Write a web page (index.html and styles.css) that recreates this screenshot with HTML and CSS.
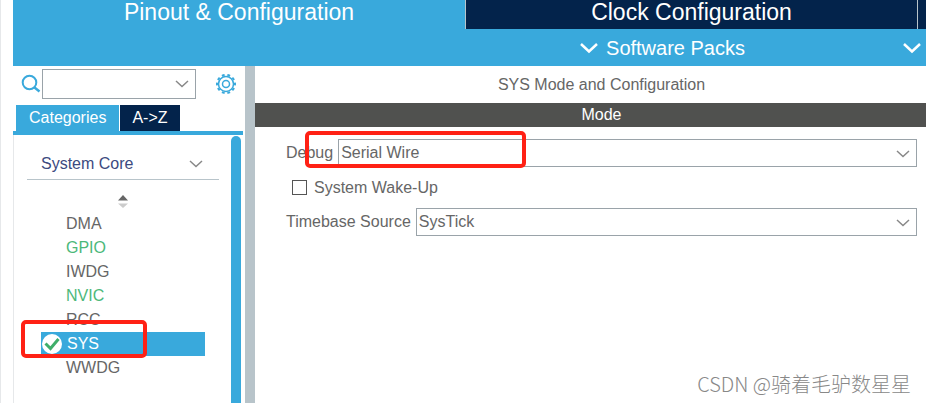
FILE: index.html
```html
<!DOCTYPE html>
<html lang="en">
<head>
    <meta charset="UTF-8">
    <meta name="viewport" content="width=device-width, initial-scale=1">
    <title>Pinout &amp; Configuration</title>
    <link rel="stylesheet" href="styles.css">
</head>
<body>
    <div class="app">
        <nav class="main-tabs">
            <button class="main-tab active">Pinout &amp; Configuration</button>
            <button class="main-tab">Clock Configuration</button>
            <button class="main-tab" aria-label="Next tab"></button>
        </nav>

        <div class="toolbar">
            <button class="menu-button">
                <svg width="18" height="12" viewBox="0 0 18 12"><path d="m1 2 8 7.500L17 2" fill="none" stroke="#fff" stroke-width="2.500"/></svg>
                Software Packs
            </button>
            <button class="menu-button" aria-label="Pinout">
                <svg width="18" height="12" viewBox="0 0 18 12"><path d="m1 2 8 7.500L17 2" fill="none" stroke="#fff" stroke-width="2.500"/></svg>
            </button>
        </div>

        <div class="content">
            <aside class="sidebar">
                <div class="search-row">
                    <label for="search" aria-label="Search">
                        <svg width="20" height="20" viewBox="0 0 20 20" fill="none" stroke="#39a9dc"><circle cx="8.500" cy="8.500" r="6.800" stroke-width="2"/><path d="m13.500 13.500 5 4" stroke-width="2.500"/></svg>
                    </label>
                    <div class="combo search-combo">
                        <input id="search" type="text">
                        <svg class="arrow" width="14" height="8" viewBox="0 0 14 8"><path d="m1 1 6 5.500L13 1"/></svg>
                    </div>
                    <button class="gear" aria-label="Settings">
                        <svg width="22" height="22" viewBox="-11 -11 22 22" fill="none" stroke="#39a9dc">
                            <circle r="7.500" stroke-width="1.500"/>
                            <circle r="9" stroke-width="2" pathLength="100" stroke-dasharray="5 5" stroke-dashoffset="2.500"/>
                            <circle r="3.500" stroke-width="1.500"/>
                        </svg>
                    </button>
                </div>

                <div class="side-tabs">
                    <button class="side-tab active">Categories</button>
                    <button class="side-tab">A-&gt;Z</button>
                </div>

                <div class="tree">
                    <div class="tree-body">
                        <button class="group">
                            System Core
                            <svg class="arrow" width="14" height="8" viewBox="0 0 14 8"><path d="m1 1 6 5.500L13 1"/></svg>
                        </button>
                        <button class="sorter" aria-label="Sort">
                            <svg width="10" height="14" viewBox="0 0 10 14"><path d="m5 0 5 5.500H0z" fill="#666"/><path d="m5 13 5-4.500H0z" fill="#ccc"/></svg>
                        </button>
                        <ul class="items">
                            <li><a href="#dma">DMA</a></li>
                            <li><a href="#gpio" class="used">GPIO</a></li>
                            <li><a href="#iwdg">IWDG</a></li>
                            <li><a href="#nvic" class="used">NVIC</a></li>
                            <li><a href="#rcc">RCC</a></li>
                            <li class="selected">
                                <a href="#sys">
                                    <svg width="22" height="22" viewBox="0 0 22 22"><circle cx="11" cy="11" r="10" fill="#fff"/><path d="m4.500 10.500 5 5L17.500 6" fill="none" stroke="#3fae6a" stroke-width="3"/></svg>
                                    SYS
                                </a>
                                <span class="mark mark-item"></span>
                            </li>
                            <li><a href="#wwdg">WWDG</a></li>
                        </ul>
                    </div>
                    <div class="scrollbar"></div>
                </div>
            </aside>

            <main class="panel">
                <h1 class="panel-title">SYS Mode and Configuration</h1>
                <h2 class="panel-bar">Mode</h2>
                <form class="mode-form">
                    <div class="row">
                        <label for="debug">Debug</label>
                        <div class="combo">
                            <select id="debug"><option>Serial Wire</option></select>
                            <svg class="arrow" width="14" height="8" viewBox="0 0 14 8"><path d="m1 1 6 5.500L13 1"/></svg>
                            <span class="mark mark-debug"></span>
                        </div>
                    </div>
                    <div class="row check-row">
                        <input id="wakeup" type="checkbox">
                        <label for="wakeup">System Wake-Up</label>
                    </div>
                    <div class="row">
                        <label for="timebase">Timebase Source</label>
                        <div class="combo">
                            <select id="timebase"><option>SysTick</option></select>
                            <svg class="arrow" width="14" height="8" viewBox="0 0 14 8"><path d="m1 1 6 5.500L13 1"/></svg>
                        </div>
                    </div>
                </form>
                <footer class="watermark">CSDN @骑着毛驴数星星</footer>
            </main>
        </div>
    </div>
</body>
</html>
```
FILE: styles.css
```css
* {
    box-sizing: border-box;
}

body {
    margin: 0;
    font-family: "Liberation Sans", Arial, sans-serif;
    font-size: 16px;
    line-height: 24px;
    color: #666;
    background-color: #fff;
}

button, input, select {
    margin: 0;
    padding: 0;
    border: none;
    border-radius: 0;
    background: none;
    font: inherit;
    color: inherit;
}

button {
    cursor: pointer;
}

svg {
    display: block;
    flex: none;
}

.app {
    display: flex;
    flex-direction: column;
    min-height: 100vh;
    padding-left: 12px;
    border-left: 1px solid #e6e8ea;
}

/* top tabs */
.main-tabs {
    display: grid;
    grid-template-columns: 1fr 1fr 9px;
    height: 29px;
}

.main-tab {
    padding-bottom: 5px;
    font-size: 23px;
    line-height: 24px;
    color: #fff;
    background-color: #03234b;
    border-left: 1px solid #b8c4ca;
}

.main-tab.active {
    background-color: #39a9dc;
    border-left: none;
}

.toolbar {
    display: flex;
    justify-content: flex-end;
    gap: 158px;
    height: 37px;
    padding-right: 5px;
    background-color: #39a9dc;
}

.menu-button {
    display: flex;
    align-items: center;
    gap: 8px;
    font-size: 20px;
    color: #fff;
}

.content {
    flex: 1;
    display: flex;
}

/* left column */
.sidebar {
    display: flex;
    flex-direction: column;
    width: 242px;
    border-right: 10px solid #b8c4ca;
}

.search-row {
    display: flex;
    align-items: center;
    height: 33px;
    margin-bottom: 6px;
    padding: 3px 8px 0;
}

.combo {
    position: relative;
    flex: 1;
    display: flex;
    border: 1px solid #9aa3a9;
}

.combo input,
.combo select {
    flex: 1;
    width: 100%;
    height: 26px;
    padding: 0 24px 0 2px;
    appearance: none;
}

.combo .arrow {
    position: absolute;
    top: 10px;
    right: 6px;
    pointer-events: none;
}

.arrow path {
    fill: none;
    stroke: #888;
    stroke-width: 1.5;
}

.search-combo {
    flex: none;
    width: 154px;
    margin: 0 19px 0 1px;
}

.combo #search {
    height: 28px;
}

.side-tabs {
    display: flex;
    gap: 1px;
    padding-left: 3px;
    margin-right: 2px;
    border-bottom: 4px solid #39a9dc;
}

.side-tab {
    height: 26px;
    padding: 0 12px;
    color: #fff;
    background-color: #03234b;
}

.side-tab.active {
    padding: 0 13px;
    background-color: #39a9dc;
}

.tree {
    flex: 1;
    display: flex;
    margin-right: 4px;
    border-left: 1px solid #e6e8ea;
}

.tree-body {
    flex: 1;
    padding: 13px 12px 0 13px;
}

.group {
    display: flex;
    align-items: center;
    justify-content: space-between;
    width: 100%;
    height: 32px;
    padding: 0 16px 0 14px;
    color: #3c4a80;
    border-bottom: 1px solid #b8c4ca;
}

.sorter {
    display: block;
    margin: 15px auto 3px;
}

.items {
    margin: 0 14px;
    padding: 0;
    list-style: none;
}

.items a {
    display: flex;
    align-items: center;
    gap: 4px;
    height: 24px;
    padding-left: 25px;
    color: inherit;
    text-decoration: none;
}

.items .used {
    color: #4cb87a;
}

.selected {
    position: relative;
    color: #fff;
    background-color: #39a9dc;
}

.items .selected a {
    padding-left: 0;
}

.scrollbar {
    width: 10px;
    margin-top: 1px;
    border-radius: 5px 5px 0 0;
    background-color: #39a9dc;
}

/* red highlight frames */
.mark {
    position: absolute;
    border: 4px solid #ff2115;
    border-radius: 5px;
    pointer-events: none;
}

.mark-item {
    top: -12px;
    left: -20px;
    width: 126px;
    height: 38px;
}

.mark-debug {
    top: -9px;
    left: -34px;
    width: 221px;
    height: 37px;
}

/* right column */
.panel {
    flex: 1;
    display: flex;
    flex-direction: column;
}

.panel-title,
.panel-bar {
    margin: 0;
    padding-left: 22px;
    font-size: 16px;
    font-weight: normal;
    text-align: center;
}

.panel-title {
    padding-top: 7px;
    padding-bottom: 6px;
}

.panel-bar {
    color: #fff;
    background-color: #50514f;
}

.mode-form {
    display: flex;
    flex-direction: column;
    gap: 7px;
    padding: 12px 9px 0 31px;
}

.row {
    display: flex;
    align-items: center;
    gap: 5px;
}

.check-row {
    gap: 7px;
    height: 27px;
    padding-left: 6px;
}

.check-row input {
    width: 15px;
    height: 15px;
    border: 1px solid #555;
    appearance: none;
}

.check-row input:checked {
    background-color: #39a9dc;
}

.watermark {
    margin-top: auto;
    padding: 0 15px 7px;
    font-family: "Noto Sans CJK SC", sans-serif;
    font-size: 20px;
    font-weight: 300;
    text-align: right;
    color: #888;
}
```
